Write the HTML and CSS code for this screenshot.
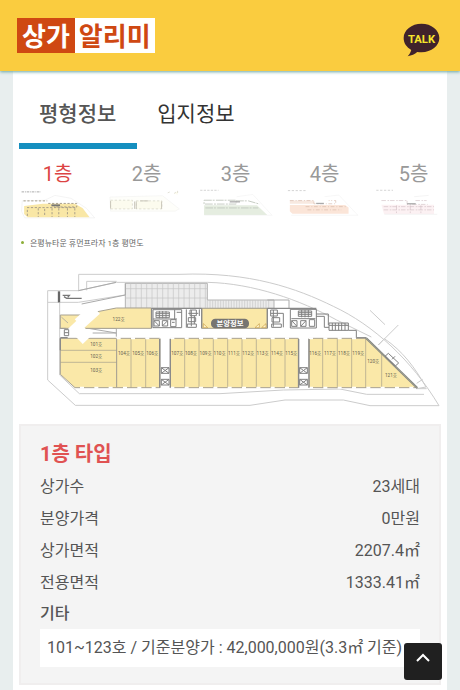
FILE: index.html
```html
<!DOCTYPE html>
<html lang="ko">
<head>
<meta charset="utf-8">
<meta name="viewport" content="width=device-width, initial-scale=1">
<title>상가알리미</title>
<link rel="stylesheet" href="styles.css">
</head>
<body>
<header class="topbar">
  <a class="logo" href="#"><span class="logo-left">상가</span><span class="logo-right">알리미</span></a>
  <a class="talk" href="#" aria-label="TALK">
    <svg viewBox="0 0 112 102" width="37" height="34">
      <path fill="#40222b" d="M56 2C26 2 2 21 2 45c0 16 9 28 23 36-2 8-6 14-11 19 12-2 22-7 29-13 4 1 9 1 13 1 30 0 54-19 54-43S86 2 56 2z"/>
      <text x="56" y="59" text-anchor="middle" class="talk-text">TALK</text>
    </svg>
  </a>
</header>
<main class="card">
  <nav class="tabs">
    <button class="tab tab-on" type="button">평형정보</button>
    <button class="tab" type="button">입지정보</button>
  </nav>
  <div class="floors">
    <button class="floor floor-on" type="button">1층
      <svg class="thumb" viewBox="0 0 240 96">
        <path d="M8 9h60" stroke="#aaa" stroke-width="3" stroke-dasharray="8 3 3 2"/>
        <path d="M10 37l70-2 32-15 50 9 48 31 26 30H18L8 70z" fill="none" stroke="#eee" stroke-width="2"/>
        <path d="M16 53l58-7h100l24 13 22 29H27L16 78z" fill="#f9e7a6"/>
        <path d="M14 37h74M91 45h89v11h-70M25 58h150M26 65v19M60 60v27M80 62v24M103 60v27M124 60v27M151 60v27M174 60v27" fill="none" stroke="#a59c88" stroke-width="3" stroke-dasharray="7 5"/>
        <path d="M101 51h27" stroke="#777" stroke-width="6"/>
      </svg>
    </button>
    <button class="floor" type="button">2층
      <svg class="thumb" viewBox="0 0 240 96">
        <path d="M6 25l164-4 52 41-13 7H8z" fill="#fefefa" stroke="#f3f3f1" stroke-width="2"/>
        <path d="M8 35h68v27H8zM88 37h80v25H88zM186 12l10-4M206 14l11-8v12" fill="#fcfbee" stroke="#d2d0c2" stroke-width="2" stroke-dasharray="7 6"/>
        <path d="M8 38v23M83 39v23M88 39v23M167 39v23M100 37h26" stroke="#c8c5b8" stroke-width="3"/>
      </svg>
    </button>
    <button class="floor" type="button">3층
      <svg class="thumb" viewBox="0 0 240 96">
        <path d="M10 4h57" stroke="#bbb" stroke-width="2" stroke-dasharray="7 4"/>
        <path d="M22 51h165l32 30H22z" fill="#e5ede0"/>
        <path d="M22 35h100v12H22zM122 37h38l35 10M26 59h165" fill="none" stroke="#c5cbc2" stroke-width="3" stroke-dasharray="24 3 6 4"/>
        <path d="M124 24l50-7 60 65H23" fill="none" stroke="#f3f3f3" stroke-width="2"/>
        <path d="M102 40h32" stroke="#aaa" stroke-width="4"/>
      </svg>
    </button>
    <button class="floor" type="button">4층
      <svg class="thumb" viewBox="0 0 240 96">
        <path d="M6 5h55" stroke="#bbb" stroke-width="2" stroke-dasharray="7 5"/>
        <path d="M12 50h172l11 8v19H20l-8-8z" fill="#fbe5d8"/>
        <path d="M12 36h75v10H12z" fill="#f8e9e0"/>
        <path d="M12 36h75v10h68V36h-22M61 55h130M67 65h105" fill="none" stroke="#d7b9a9" stroke-width="2" stroke-dasharray="12 6 3 5"/>
        <path d="M120 24l45-5 59 63H16" fill="none" stroke="#f2f2f2" stroke-width="2"/>
        <path d="M94 45h24" stroke="#aaa" stroke-width="4"/>
      </svg>
    </button>
    <button class="floor" type="button">5층
      <svg class="thumb" viewBox="0 0 240 96">
        <path d="M4 4h52" stroke="#bbb" stroke-width="2" stroke-dasharray="7 5"/>
        <path d="M20 49h164v29H28z" fill="#fcf1f3"/>
        <path d="M20 36h80v12h64M27 55h157M27 65h157M67 51v25M110 51v25M143 51v25M126 36h35" fill="none" stroke="#d2bfc4" stroke-width="2" stroke-dasharray="14 5 5 3"/>
        <path d="M122 24l45-4M29 79h165" fill="none" stroke="#eee" stroke-width="2"/>
        <path d="M100 46h27" stroke="#aaa" stroke-width="4"/>
      </svg>
    </button>
  </div>

  <figure class="plan">
    <figcaption class="caption">은평뉴타운 휴먼프라자 1층 평면도</figcaption>
    <svg class="drawing" viewBox="0 0 1260 450" role="img" aria-label="1층 평면도">
      <g fill="none" stroke="#cccccc" stroke-width="3">
        <path d="M176 77V28H480C690 20 830 70 940 124 1060 180 1175 285 1257 422H1050L970 405H795L690 421H166L83 345V77H176L290 52H562"/>
        <path d="M200 76V49h90M562 52C700 55 840 105 950 165L1054 216M83 112H175L315 90M119 112V330L178 386H600L790 375 960 372 1040 388H1212"/>
        <path d="M1050 136l45 43M1135 180l-60 60M1075 240l18-19c56 38 90 85 125 145l-28 5M1190 355l18-12M1190 371h30"/>
      </g>
      <path d="M316 55H562V105H762V130H316z" fill="#ececec" stroke="#b4b4b4" stroke-width="3"/>
      <g stroke="#c4c4c4" stroke-width="2">
        <path d="M316 71H562M316 99H562M332 55V130M348 55V130M364 55V130M380 55V130M396 55V130M412 55V130M428 55V130M444 55V130M460 55V130M476 55V130M492 55V130M508 55V130M524 55V130M540 55V130M556 55V130"/>
        <path d="M562 105v25M570 105v25M578 105v25M586 105v25M594 105v25M602 105v25M610 105v25M618 105v25M626 105v25M634 105v25M642 105v25M650 105v25M658 105v25M666 105v25M674 105v25M682 105v25M690 105v25M698 105v25M706 105v25M714 105v25M722 105v25M730 105v25M738 105v25M746 105v25"/>
      </g>
      <path d="M742 105h65v25" fill="none" stroke="#aaa" stroke-width="3"/>
      <path d="M117 79v33" stroke="#666" stroke-width="7"/>
      <path d="M185 100h-45l-8-5M128 91h20l-5 6" fill="none" stroke="#777" stroke-width="4"/>
      <path d="M175 77l113-25M185 117l131-27V55M119 190h170v25M205 190l84 14M218 204h70" fill="none" stroke="#aaa" stroke-width="3"/>

      <g fill="#fae8a8" stroke="#a8a292" stroke-width="3">
        <path d="M121 150h60l108-21h105V190H121z"/>
        <path d="M545 130H742V190H545z"/>
        <path d="M121 220H290V368H165L121 328z"/>
        <path d="M290 220H420V368H290zM451 220H835V368H451zM867 220H1040L1191 368H867z"/>
      </g>
      <path d="M177 177l50-45M158 178l44 46" stroke="#fff" stroke-width="38"/>
      <path d="M121 190h16M124 156l20 18" fill="none" stroke="#999" stroke-width="2"/>
      <path d="M121 256H290M121 292H290M333 220V368M377 220V368M494 220V368M537 220V368M580 220V368M623 220V368M666 220V368M709 220V368M752 220V368M795 220V368M908 220V368M952 220V368M995 220V368M1037 220V368M1085 264V368" fill="none" stroke="#a39d8b" stroke-width="2"/>
      <path d="M290 220H420M451 220H835M867 220H1040M180 368H420M451 368H835M867 368H1191" fill="none" stroke="#fff" stroke-width="6" stroke-dasharray="12 31"/>
      <path d="M1038 219L1192 369" stroke="#858585" stroke-width="6"/>
      <path d="M1038 219L1192 369" stroke="#a8ad91" stroke-width="2"/>
      <path d="M419 222V368M451 222V368M836 222V368M867 222V368M121 218h22M121 220v36M395 130v60M545 130v60M742 130v60M395 130h150M742 130h147" fill="none" stroke="#8a8a8a" stroke-width="4"/>

      <g fill="none" stroke="#808080" stroke-width="3">
        <path d="M399 134h86v54h-86zM408 141h40v17h-40zM408 146h40M408 152h40M418 138v22M428 138v22M438 138v22M399 162h72M402 167h16v16h-16zM427 167h16v16h-16zM452 164h16v21h-16zM402 167l16 16M427 183l16-16M464 134v28M485 142h-15M456 172h8"/>
        <path d="M499 133v55M510 135h19v17h-19zM505 158h22v12h-22zM502 177h27v10h-27zM514 135v49M505 145h30M523 152v25M538 133v20"/>
        <path d="M752 135h20v18h-20zM756 158h23v13h-23zM755 177h29v10h-29zM760 135v50M773 145h17v42M752 145h21"/>
        <path d="M811 133h78v56h-78zM835 138h40v16h-40zM835 143h40M835 148h40M845 135v22M855 135v22M865 135v22M814 161h72M815 167h16v17h-16zM842 167h16v17h-16zM868 164h16v20h-16zM815 167l16 17M842 184l16-17"/>
        <path d="M889 147h36v33M889 154h24v33h14M927 174h58v22h-58zM927 181h58M937 174v22M946 174v22M956 174v22M965 174v22M975 174v22M985 196h24v22h29"/>
        <path d="M424 308h23v17h-23zM424 343h23v17h-23zM424 308l23 17M447 308l-23 17M424 343l23 17M447 343l-23 17M839 308h23v17h-23zM839 343h23v17h-23zM839 308l23 17M862 308l-23 17M839 343l23 17M862 343l-23 17"/>
        <path d="M133 194h13v18h-13zM133 203h13M1105 265l31 29-10 9-31-29zM1116 283l9-9"/>
      </g>
      <path d="M550 188v-12l13 12zM738 188v-12l-13 12zM718 188v-12l-13 12z" fill="#fff4cc" stroke="#c69b45" stroke-width="2"/>

      <g class="unit">
        <text x="296" y="167">122호</text><text x="229" y="242">101호</text><text x="229" y="279">102호</text><text x="229" y="322">103호</text>
        <text x="312" y="270">104호</text><text x="355" y="270">105호</text><text x="397" y="270">106호</text><text x="472" y="270">107호</text><text x="513" y="270">108호</text><text x="557" y="270">109호</text><text x="599" y="270">110호</text><text x="642" y="270">111호</text><text x="685" y="270">112호</text><text x="728" y="270">113호</text><text x="771" y="270">114호</text><text x="814" y="270">115호</text><text x="886" y="270">116호</text><text x="930" y="270">117호</text><text x="972" y="270">118호</text><text x="1015" y="270">119호</text><text x="1060" y="295">120호</text><text x="1113" y="337">121호</text>
      </g>
      <rect x="573" y="161" width="114" height="29" rx="13" fill="#777571"/>
      <text class="plan-badge" x="630" y="184">분양정보</text>
    </svg>
  </figure>

  <section class="info">
    <h2 class="info-title">1층 타입</h2>
    <dl class="rows">
      <div class="row"><dt>상가수</dt><dd>23세대</dd></div>
      <div class="row"><dt>분양가격</dt><dd>0만원</dd></div>
      <div class="row"><dt>상가면적</dt><dd>2207.4㎡</dd></div>
      <div class="row"><dt>전용면적</dt><dd>1333.41㎡</dd></div>
    </dl>
    <h3 class="etc-title">기타</h3>
    <p class="etc">101~123호 / 기준분양가 : 42,000,000원(3.3㎡ 기준)</p>
  </section>
</main>
<button class="to-top" type="button" aria-label="맨 위로">
  <svg viewBox="0 0 38 38" width="38" height="38"><path d="M13 18l6-6 6 6" fill="none" stroke="#fff" stroke-width="2"/></svg>
</button>
</body>
</html>
```
FILE: styles.css
```css
* { box-sizing: border-box; }
body {
  margin: 0;
  background: #e8eeee;
  color: #555;
  font-family: Roboto, "Noto Sans CJK KR", sans-serif;
  font-size: 16px;
}
button {
  margin: 0;
  border: 0;
  background: none;
  color: inherit;
  font: inherit;
}
.topbar {
  position: relative;
  display: flex;
  align-items: center;
  justify-content: space-between;
  height: 71px;
  padding: 0 20px 0 17px;
  background: #facc3f;
  box-shadow: 0 1px 3px #6aa7a3;
}
.logo {
  display: flex;
  height: 35px;
  font-family: "Noto Sans CJK KR", sans-serif;
  font-size: 26px;
  font-weight: 700;
  line-height: 34px;
  text-decoration: none;
}
.logo-left {
  padding: 0 5px;
  background: #cf4812;
  color: #fff;
}
.logo-right {
  padding: 0 4px;
  background: #fff;
  color: #cf4812;
}
.talk { display: flex; padding-top: 8px; }
.talk-text {
  fill: #f7e52b;
  font-size: 34px;
  font-weight: 700;
}
.card {
  min-height: calc(100vh - 71px);
  margin: 0 13px;
  padding-bottom: 4px;
  overflow: hidden;
  background: #fff;
}
.tabs { display: flex; padding: 0 6px; }
.tab {
  padding: 30px 21px 16px 20px;
  border-bottom: 6px solid transparent;
  color: #333;
  font-size: 21px;
  line-height: 26px;
}
.tab-on {
  border-color: #158fbf;
  color: #555;
  font-weight: 500;
}
.floors {
  display: flex;
  padding-top: 10px;
  overflow: hidden;
}
.floor {
  flex: 0 0 89px;
  padding: 0 6px;
  color: #999;
  font-size: 20px;
  line-height: 30px;
}
.floor-on { color: #dc4343; }
.thumb { display: block; width: 100%; }
.plan { margin: 0 7px; }
.caption {
  display: flex;
  align-items: center;
  gap: 6px;
  height: 45px;
  padding-left: 1px;
  color: #666;
  font-size: 8px;
}
.caption::before {
  width: 3px;
  height: 3px;
  border-radius: 50%;
  background: #8cae38;
  content: "";
}
.drawing { display: block; width: 100%; }
.unit {
  fill: #625d50;
  font-size: 14px;
  text-anchor: middle;
}
.plan-badge {
  fill: #fff;
  font-size: 22px;
  font-weight: 700;
  text-anchor: middle;
}
.info {
  margin: 9px 6px 0;
  padding: 12px 19px 16px;
  border: 2px solid #f0eeee;
  background: #f4f4f4;
}
.info-title {
  margin: 0;
  color: #e05252;
  font-size: 20px;
  font-weight: 700;
  line-height: 33px;
}
.rows { margin: 0; }
.row {
  display: flex;
  justify-content: space-between;
  line-height: 32px;
}
.row dd { margin: 0; }
.etc-title {
  margin: 0;
  font-size: 16px;
  font-weight: 500;
  line-height: 30px;
}
.etc {
  margin: 0;
  padding: 0 7px;
  overflow: hidden;
  background: #fff;
  line-height: 38px;
  white-space: nowrap;
}
.to-top {
  position: fixed;
  right: 18px;
  bottom: 10px;
  width: 38px;
  height: 37px;
  padding: 0;
  border-radius: 3px;
  background: #202020;
}
.to-top svg { display: block; }
```
